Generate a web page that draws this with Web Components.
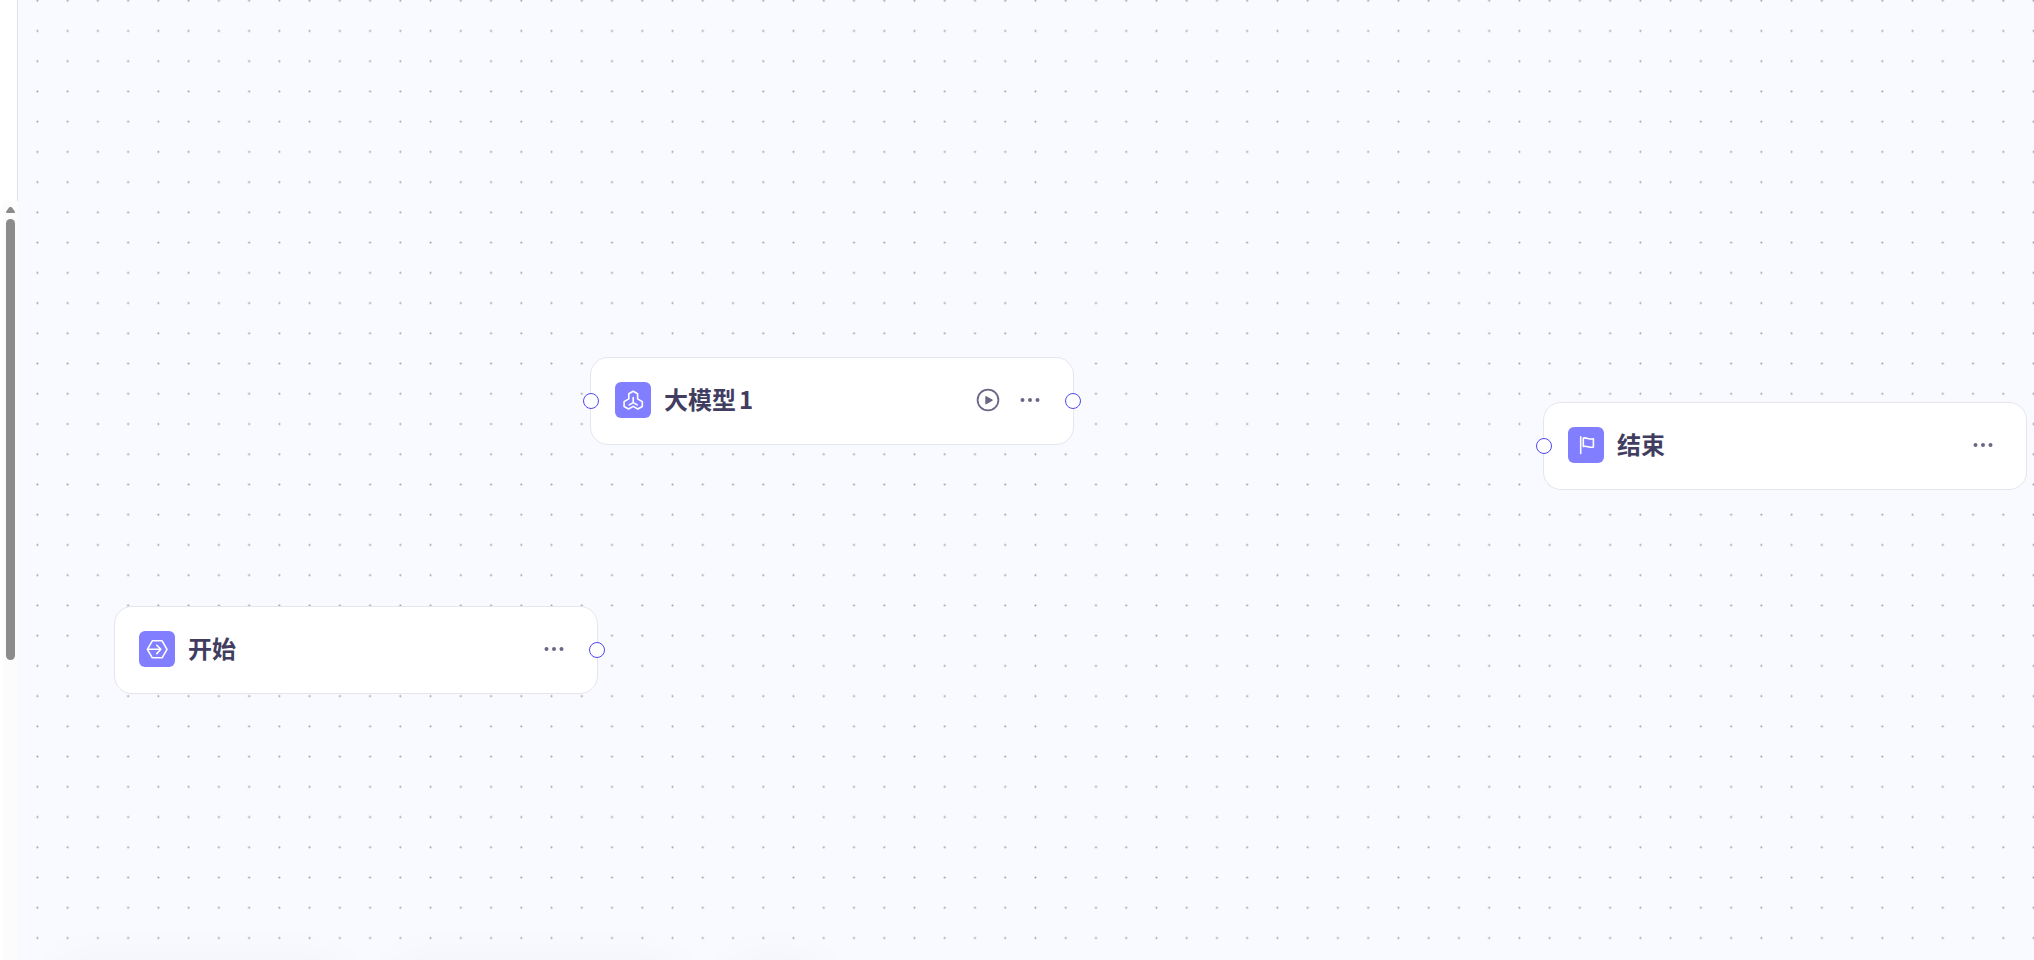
<!DOCTYPE html>
<html lang="zh-CN">
<head>
<meta charset="utf-8">
<title>工作流</title>
<style>
html, body { margin: 0; height: 100%; }
body { font-family: "Noto Sans CJK SC", "Noto Sans", sans-serif; color: #413d61; overflow: hidden; }
</style>
</head>
<body>
<flow-app></flow-app>
<script>
const define = (name, html) => {
  const template = document.createElement('template');
  template.innerHTML = html;
  customElements.define(name, class extends HTMLElement {
    constructor() {
      super();
      this.attachShadow({ mode: 'open' }).append(template.content.cloneNode(true));
    }
  });
};

define('side-scroll', `
<style>
:host { display: flex; flex-direction: column; width: 18px; flex: none; background: #fff; }
.panel { height: 201px; box-sizing: border-box; border-right: 1px solid #e0e1e6; }
.track { flex: 1; margin-left: 3px; padding: 6px 3px 0; background: #fcfcfc; }
svg { display: block; width: 9px; height: 6px; margin-bottom: 6px; }
.thumb { width: 9px; height: 441px; border-radius: 5px; background: #8b8b8b; }
</style>
<div class="panel"></div>
<div class="track">
  <svg viewBox="0 0 9 6" aria-hidden="true"><path d="M3 .6Q4.5 -.8 6 .6L8.8 4.6Q9 6 8.4 6H.6Q0 6 .2 4.6Z" fill="#8b8b8b"/></svg>
  <div class="thumb"></div>
</div>`);

define('dot-grid', `
<style>
:host { display: block; }
svg { display: block; width: 100%; height: 100%; }
</style>
<svg aria-hidden="true">
  <defs><pattern id="dots" x="4.3" y="-14.4" width="30.245" height="30.235" patternUnits="userSpaceOnUse"><circle cx="15.1" cy="15.1" r="1" fill="#9a9ba3"/></pattern></defs>
  <rect width="100%" height="100%" fill="url(#dots)"/>
</svg>`);

define('flow-port', `
<style>
:host { display: block; box-sizing: border-box; width: 16px; height: 16px; border: 1px solid #5148f0; border-radius: 50%; background: #fff; }
</style>`);

define('more-button', `
<style>
:host { display: block; }
button { display: block; padding: 0; border: 0; background: none; color: #6b6685; }
svg { display: block; width: 24px; height: 24px; }
</style>
<button type="button" aria-label="更多"><svg viewBox="0 0 24 24" fill="currentColor"><circle cx="4.5" cy="12" r="2"/><circle cx="12" cy="12" r="2"/><circle cx="19.5" cy="12" r="2"/></svg></button>`);

define('run-button', `
<style>
:host { display: block; }
button { display: block; padding: 0; border: 0; background: none; color: #6b6685; }
svg { display: block; width: 24px; height: 24px; }
</style>
<button type="button" aria-label="运行"><svg viewBox="0 0 24 24"><circle cx="12" cy="12" r="10.4" fill="none" stroke="currentColor" stroke-width="1.8"/><path d="M10 8.8L16 12.2L10 15.6Z" fill="currentColor" stroke="currentColor" stroke-width="1.4" stroke-linejoin="round"/></svg></button>`);

define('flow-node', `
<style>
:host { display: flex; align-items: center; box-sizing: border-box; width: 484px; height: 88px; padding: 0 31px 2px 24px; border: 1px solid #e5e5ec; border-radius: 18px; background: #fff; }
.icon { display: block; width: 36px; height: 36px; margin-right: 13px; border-radius: 6px; background: #817fff; }
h2 { flex: 1; margin: 0; padding-bottom: 2px; font-size: 24px; line-height: 36px; font-weight: 700; white-space: nowrap; text-autospace: normal; }
.actions { display: flex; gap: 18px; }
::slotted(flow-port) { position: absolute; top: 50%; translate: 0 -50%; }
::slotted(flow-port[slot="in"]) { left: -8px; }
::slotted(flow-port[slot="out"]) { right: -8px; }
</style>
<slot name="in"></slot>
<span class="icon"><slot name="icon"></slot></span>
<h2><slot></slot></h2>
<div class="actions"><slot name="actions"></slot></div>
<slot name="out"></slot>`);

define('flow-canvas', `
<style>
:host { display: block; position: relative; flex: 1; min-width: 0; overflow: hidden; background: #f9faff; }
dot-grid { position: absolute; inset: 0; }
flow-node { position: absolute; }
.llm { left: 572px; top: 357px; }
.start { left: 96px; top: 606px; }
.end { left: 1525px; top: 402px; }
.icon { display: block; width: 36px; height: 36px; fill: none; stroke: #fff; stroke-width: 1.6; stroke-linejoin: round; stroke-linecap: round; }
.docks { position: absolute; left: 36px; top: 100%; display: flex; gap: 48px; }
.docks i { width: 288px; height: 48px; border-radius: 12px; box-shadow: 0 0 48px rgb(40 40 70 / 3%); }
.docks i:last-child { width: 96px; }
</style>
<dot-grid></dot-grid>
<div class="docks"><i></i><i></i><i></i></div>
<flow-node class="start">
  <svg slot="icon" class="icon" viewBox="0 0 36 36" aria-hidden="true"><path d="M8.4 18.3L13.3 9.8H23.1L28 18.3L23.1 26.8H13.3Z"/><path d="M9.2 18.3H21.6M17.8 14.2L21.8 18.3L17.8 22.6"/></svg>
  开始
  <more-button slot="actions"></more-button>
  <flow-port slot="out"></flow-port>
</flow-node>
<flow-node class="llm">
  <flow-port slot="in"></flow-port>
  <svg slot="icon" class="icon" viewBox="0 0 36 36" aria-hidden="true"><path d="M18.2 9.2L22.6 11.7V16.9L27.3 19.6V24.5L22.8 27L18.2 24.4L13.6 27L9.1 24.5V19.6L13.8 16.9V11.7Z"/><path d="M18.2 15.6V20.6L14.2 22.9M18.2 20.6L22.2 22.9"/></svg>
  大模型1
  <run-button slot="actions"></run-button>
  <more-button slot="actions"></more-button>
  <flow-port slot="out"></flow-port>
</flow-node>
<flow-node class="end">
  <flow-port slot="in"></flow-port>
  <svg slot="icon" class="icon" viewBox="0 0 36 36" aria-hidden="true"><path d="M12.7 9.7V26.5M15.3 11C19 10.2 21.2 13 25.4 11.8V20C21.2 21.2 19 18.4 15.3 19.4Z"/></svg>
  结束
  <more-button slot="actions"></more-button>
</flow-node>`);

define('flow-app', `
<style>
:host { display: flex; height: 100vh; }
</style>
<side-scroll></side-scroll>
<flow-canvas></flow-canvas>`);
</script>
</body>
</html>
